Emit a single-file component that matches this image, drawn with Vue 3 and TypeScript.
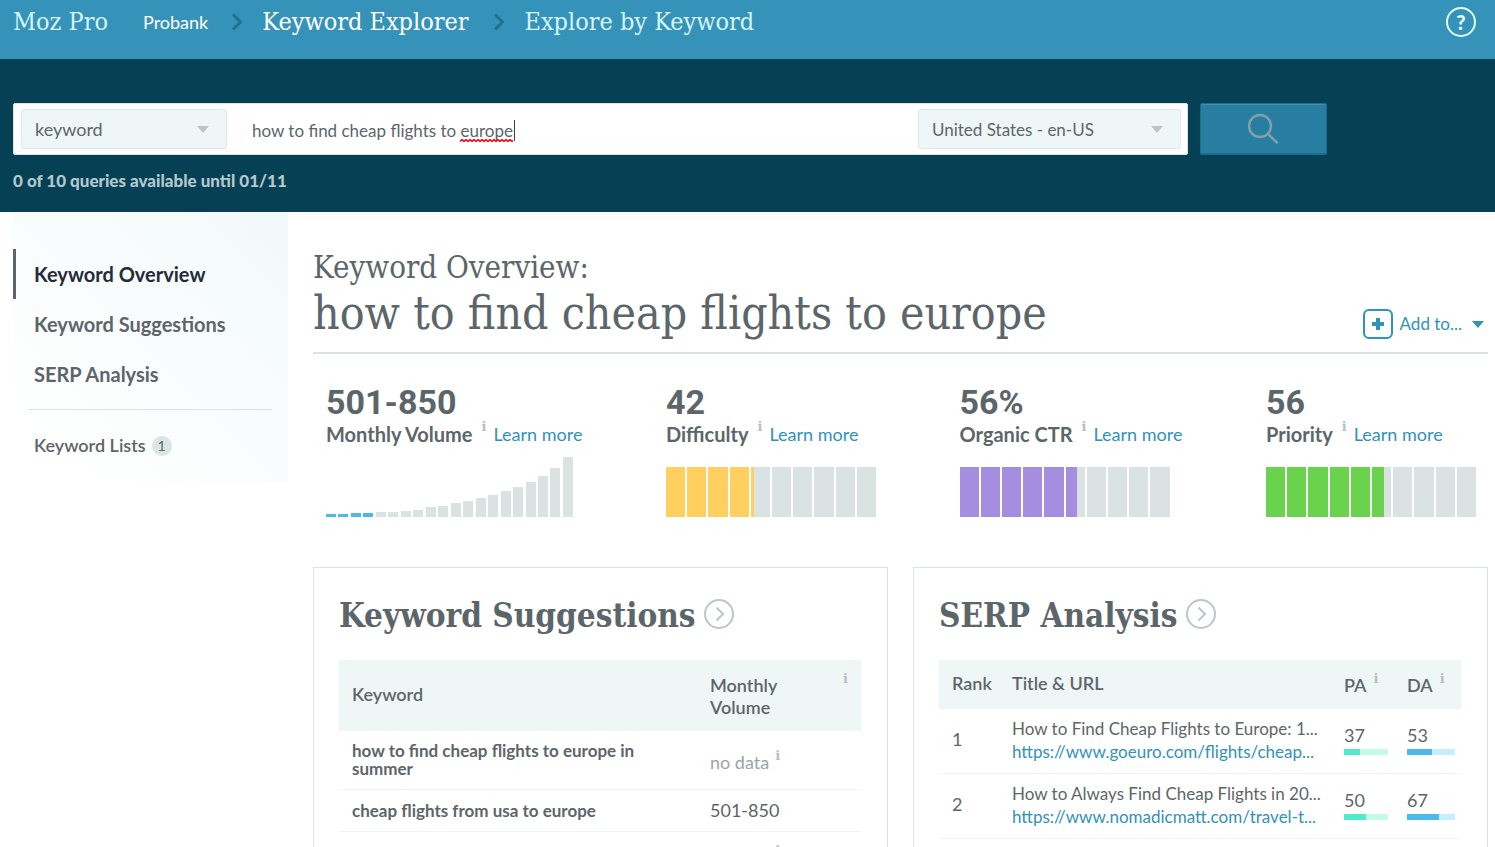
<script setup lang="ts">
import { ref } from 'vue'

interface Metric {
  value: string
  label: string
  score?: number
  color?: string
}

interface Suggestion {
  keyword: string
  volume: string | null
}

interface Result {
  rank: number
  title: string
  url: string
  pa: number
  da: number
}

const searchType = ref('keyword')
const query = ref('how to find cheap flights to europe')
const locale = ref('United States - en-US')

const metrics: Metric[] = [
  { value: '501-850', label: 'Monthly Volume' },
  { value: '42', label: 'Difficulty', score: 42, color: '#ffd060' },
  { value: '56%', label: 'Organic CTR', score: 56, color: '#a58de0' },
  { value: '56', label: 'Priority', score: 56, color: '#6ad34e' },
]

const volumeBars = [3, 3, 4, 4, 5, 5, 6, 7, 10, 11, 14, 16, 19, 22, 26, 30, 35, 41, 49, 60]
const activeVolumeBars = 4

// Share of one of the ten cells that the score covers, allowing for the 2px gutters.
function cellFill(score: number, index: number): number {
  const cell = 19.2
  const covered = score * 2.1 - index * (cell + 2)
  return Math.max(0, Math.min(100, (covered / cell) * 100))
}

const suggestions: Suggestion[] = [
  { keyword: 'how to find cheap flights to europe in summer', volume: null },
  { keyword: 'cheap flights from usa to europe', volume: '501-850' },
  { keyword: '', volume: null },
]

const results: Result[] = [
  { rank: 1, title: 'How to Find Cheap Flights to Europe: 1...', url: 'https://www.goeuro.com/flights/cheap...', pa: 37, da: 53 },
  { rank: 2, title: 'How to Always Find Cheap Flights in 20...', url: 'https://www.nomadicmatt.com/travel-t...', pa: 50, da: 67 },
]
</script>

<template>
  <div class="page">
    <header class="topbar">
      <nav class="crumbs" aria-label="Breadcrumb">
        <a href="#" class="brand">Moz Pro</a>
        <a href="#" class="account">Probank</a>
        <svg class="chevron" width="12" height="18" viewBox="0 0 12 18" aria-hidden="true"><path d="M2 1.5 9.5 9 2 16.5" /></svg>
        <a href="#" class="section">Keyword Explorer</a>
        <svg class="chevron" width="12" height="18" viewBox="0 0 12 18" aria-hidden="true"><path d="M2 1.5 9.5 9 2 16.5" /></svg>
        <a href="#" class="current">Explore by Keyword</a>
      </nav>
      <button type="button" class="help" aria-label="Help">?</button>
    </header>

    <section class="search">
      <form class="search-form" @submit.prevent>
        <div class="search-box">
          <div class="picker type">
            <select v-model="searchType" aria-label="Search type"><option>keyword</option></select>
            <svg width="12" height="7" viewBox="0 0 12 7" aria-hidden="true"><path d="M0 0h12L6 7z" /></svg>
          </div>
          <div class="query">
            <input v-model="query" type="text" aria-label="Search query" spellcheck="false" />
            <svg class="squiggle" width="55" height="3" viewBox="0 0 55 3" aria-hidden="true">
              <path d="M0 2.500 2 .5l2 2 2-2 2 2 2-2 2 2 2-2 2 2 2-2 2 2 2-2 2 2 2-2 2 2 2-2 2 2 2-2 2 2 2-2 2 2 2-2 2 2 2-2 2 2 2-2 2 2 1-1" />
            </svg>
            <span class="cursor" aria-hidden="true"></span>
          </div>
          <div class="picker locale">
            <select v-model="locale" aria-label="Locale"><option>United States - en-US</option></select>
            <svg width="12" height="7" viewBox="0 0 12 7" aria-hidden="true"><path d="M0 0h12L6 7z" /></svg>
          </div>
        </div>
        <button type="submit" class="go" aria-label="Search">
          <svg width="32" height="32" viewBox="0 0 32 32" aria-hidden="true"><circle cx="12" cy="13" r="11" /><path d="m20 21 9 8.500" /></svg>
        </button>
      </form>
      <p class="quota">0 of 10 queries available until 01/11</p>
    </section>

    <div class="body">
      <aside class="sidebar">
        <nav>
          <a href="#" class="active">Keyword Overview</a>
          <a href="#">Keyword Suggestions</a>
          <a href="#">SERP Analysis</a>
        </nav>
        <hr />
        <a href="#" class="lists">Keyword Lists <span class="count">1</span></a>
      </aside>

      <main>
        <div class="heading">
          <h1><small>Keyword Overview:</small>how to find cheap flights to europe</h1>
          <button type="button" class="add">
            <span class="plus"><svg width="12" height="12" viewBox="0 0 12 12" aria-hidden="true"><path d="M4 0h4v4h4v4H8v4H4V8H0V4h4z" /></svg></span>
            Add to...
            <svg class="caret" width="12" height="7" viewBox="0 0 12 7" aria-hidden="true"><path d="M0 0h12L6 7z" /></svg>
          </button>
        </div>

        <section class="metrics">
          <div v-for="m in metrics" :key="m.label" class="metric">
            <strong class="value">{{ m.value }}</strong>
            <div class="label-row">
              <span class="label">{{ m.label }}</span><span class="info">i</span><a href="#">Learn more</a>
            </div>
            <div v-if="m.score === undefined" class="histogram">
              <span
                v-for="(h, i) in volumeBars"
                :key="i"
                :class="{ on: i < activeVolumeBars }"
                :style="{ height: h + 'px' }"
              ></span>
            </div>
            <div v-else class="gauge">
              <span v-for="n in 10" :key="n" class="cell">
                <span class="fill" :style="{ width: cellFill(m.score, n - 1) + '%', background: m.color }"></span>
              </span>
            </div>
          </div>
        </section>

        <div class="panels">
          <section class="panel">
            <h2>
              Keyword Suggestions
              <a href="#" aria-label="Open Keyword Suggestions"><svg width="30" height="30" viewBox="0 0 30 30" aria-hidden="true"><circle cx="15" cy="15" r="14" /><path d="m12.500 8.500 6.500 6.500-6.500 6.500" /></svg></a>
            </h2>
            <table class="suggestions">
              <thead>
                <tr>
                  <th>Keyword</th>
                  <th class="volume"><div class="split"><span>Monthly<br />Volume</span><span class="info">i</span></div></th>
                </tr>
              </thead>
              <tbody>
                <tr v-for="(s, i) in suggestions" :key="i">
                  <td class="kw">{{ s.keyword }}</td>
                  <td>
                    <template v-if="s.volume">{{ s.volume }}</template>
                    <div v-else class="nodata">no data<span class="info">i</span></div>
                  </td>
                </tr>
              </tbody>
            </table>
          </section>

          <section class="panel">
            <h2>
              SERP Analysis
              <a href="#" aria-label="Open SERP Analysis"><svg width="30" height="30" viewBox="0 0 30 30" aria-hidden="true"><circle cx="15" cy="15" r="14" /><path d="m12.500 8.500 6.500 6.500-6.500 6.500" /></svg></a>
            </h2>
            <table class="serp">
              <thead>
                <tr>
                  <th class="rank">Rank</th>
                  <th>Title &amp; URL</th>
                  <th class="pa"><div class="abbr">PA<span class="info">i</span></div></th>
                  <th class="da"><div class="abbr">DA<span class="info">i</span></div></th>
                </tr>
              </thead>
              <tbody>
                <tr v-for="r in results" :key="r.rank">
                  <td>{{ r.rank }}</td>
                  <td class="page-cell">
                    <span class="title">{{ r.title }}</span>
                    <a href="#" class="url">{{ r.url }}</a>
                  </td>
                  <td class="pa">{{ r.pa }}<div class="meter"><div :style="{ width: r.pa + '%' }"></div></div></td>
                  <td class="da">{{ r.da }}<div class="meter"><div :style="{ width: r.da + '%' }"></div></div></td>
                </tr>
              </tbody>
            </table>
          </section>
        </div>
      </main>
    </div>
  </div>
</template>

<style>
html {
  scrollbar-width: none;
}
body {
  margin: 0;
  background: #fff;
}
</style>

<style scoped>
.page {
  --slab: "Roboto Slab", "DejaVu Serif Condensed", "DejaVu Serif", serif;
  font-family: Lato, "Open Sans", sans-serif;
  font-size: 18px;
  line-height: 22px;
  color: #5c666a;
}
* {
  box-sizing: border-box;
}
a {
  color: #3192ba;
  text-decoration: none;
}
button {
  padding: 0;
  font: inherit;
  cursor: pointer;
}

/* Top bar */
.topbar {
  display: flex;
  justify-content: space-between;
  padding: 6px 19px 0 13px;
  height: 59px;
  background: #3593ba;
}
.crumbs {
  display: flex;
  align-items: center;
  height: 32px;
}
.crumbs a {
  color: #fff;
  font-family: var(--slab);
  font-size: 25px;
  line-height: 32px;
  white-space: nowrap;
}
.crumbs .brand,
.crumbs .current {
  color: #d6f3f8;
}
.crumbs .account {
  margin: 0 23px 0 35px;
  font-family: Lato, sans-serif;
  font-size: 18px;
}
.crumbs .section {
  margin: 0 24px 0 19px;
}
.crumbs .current {
  margin-left: 20px;
}
.chevron {
  flex: none;
  fill: none;
  stroke: #22708f;
  stroke-width: 3;
}
.help {
  display: grid;
  place-items: center;
  width: 30px;
  height: 30px;
  margin-top: 1px;
  border: 2px solid #e4fbff;
  border-radius: 50%;
  background: none;
  color: #e4fbff;
  font-size: 20px;
  font-weight: 900;
  line-height: 24px;
}

/* Search */
.search {
  padding: 44px 13px 0;
  height: 153px;
  background: #064054;
}
.search-form {
  display: flex;
  gap: 12px;
  max-width: 1314px;
}
.search-box {
  display: flex;
  flex: 1;
  padding: 5px 6px 5px 7px;
  border: 1px solid #dbe5e4;
  border-radius: 2px;
  background: #fff;
}
.picker {
  position: relative;
}
.picker.type {
  width: 206px;
}
.picker.locale {
  width: 263px;
}
.picker select {
  width: 100%;
  height: 40px;
  padding: 0 13px;
  border: 1px solid #dde9e8;
  border-radius: 3px;
  background: #eff7f6;
  color: #5c666a;
  font: inherit;
  appearance: none;
}
.picker.locale select {
  padding-top: 2px;
  font-size: 17px;
}
.picker svg {
  position: absolute;
  top: 17px;
  right: 18px;
  fill: #b9c5c4;
  pointer-events: none;
}
.query {
  position: relative;
  flex: 1;
}
.query input {
  width: 100%;
  height: 40px;
  padding: 2px 25px 0;
  border: 0;
  outline: 0;
  background: none;
  color: #5c666a;
  font: inherit;
  font-size: 17px;
}
.squiggle {
  position: absolute;
  top: 30px;
  left: 233px;
  fill: none;
  stroke: #ff0000;
  stroke-width: 1.5;
}
.cursor {
  position: absolute;
  top: 11px;
  left: 287px;
  width: 1px;
  height: 21px;
  background: #33404a;
}
.go {
  display: grid;
  place-items: center;
  width: 127px;
  height: 52px;
  border: 1px solid #1d6c8e;
  border-bottom-width: 2px;
  border-radius: 2px;
  background: #287ea1;
  box-shadow: inset 0 1px #4a8da5;
}
.go svg {
  fill: none;
  stroke: #80a1ab;
  stroke-width: 2.5;
  stroke-linecap: round;
}
.quota {
  margin: 15px 0 0;
  color: #b5c8ce;
  font-size: 17px;
  font-weight: 900;
}

/* Body */
.body {
  display: grid;
  grid-template-columns: 275px minmax(0, 1fr);
  gap: 25px;
  align-items: start;
  padding: 0 7px 0 13px;
}
.sidebar {
  height: 270px;
  padding-top: 37px;
  background: linear-gradient(to bottom left, #f2f9fa, #fff 90%);
}
.sidebar nav a {
  display: block;
  padding-left: 18px;
  border-left: 3px solid transparent;
  color: #5c666a;
  font-size: 20px;
  font-weight: 700;
  line-height: 50px;
}
.sidebar nav a.active {
  border-color: #5c666a;
  color: #252b38;
}
.sidebar hr {
  margin: 10px 16px 24px;
  border: 0;
  border-top: 1px solid #dbe3e2;
}
.lists {
  display: flex;
  align-items: center;
  gap: 6px;
  padding-left: 21px;
  color: #5c666a;
  font-weight: 600;
}
.count {
  width: 20px;
  height: 20px;
  margin-top: 2px;
  border-radius: 50%;
  background: #dbe5e4;
  font-size: 14px;
  font-weight: 400;
  line-height: 20px;
  text-align: center;
}

.heading {
  display: flex;
  justify-content: space-between;
  align-items: flex-end;
  height: 142px;
  padding-bottom: 10px;
  border-bottom: 2px solid #dbe3e2;
}
h1 {
  margin: 0;
  font-family: var(--slab);
  font-size: 46px;
  font-weight: 300;
  line-height: 58px;
  white-space: nowrap;
}
h1 small {
  display: block;
  font-size: 31px;
  line-height: 34px;
}
.add {
  display: flex;
  align-items: center;
  gap: 7px;
  height: 30px;
  margin: 0 4px 3px 0;
  border: 0;
  background: none;
  color: #3192ba;
  font-size: 17px;
  white-space: nowrap;
}
.plus {
  display: grid;
  place-items: center;
  width: 30px;
  height: 30px;
  border: 2px solid #3192ba;
  border-radius: 6px;
}
.add svg {
  fill: #3192ba;
}
.caret {
  margin-left: 3px;
}

/* Metrics */
.metrics {
  display: flex;
  justify-content: space-between;
  padding: 28px 12px 0 13px;
}
.metric {
  display: flex;
  flex-direction: column;
}
.value {
  font-family: Roboto, sans-serif;
  font-size: 34px;
  line-height: 40px;
}
.label-row {
  display: flex;
  line-height: 24px;
}
.label {
  font-size: 20px;
  font-weight: 700;
}
.info {
  margin: 0 7px 0 9px;
  color: #b4c1c0;
  font-family: "DejaVu Serif", serif;
  font-size: 13px;
  font-weight: 700;
  line-height: 10px;
}
.histogram,
.gauge {
  display: flex;
  height: 60px;
  margin-top: 11px;
}
.histogram {
  width: 247px;
  justify-content: space-between;
  align-items: flex-end;
}
.histogram span {
  width: 10px;
  background: #dbe3e2;
}
.histogram .on {
  background: #4cb9ec;
}
.gauge {
  width: 210px;
  padding-top: 10px;
  gap: 2px;
}
.cell {
  flex: 1;
  background: #dbe3e2;
}
.fill {
  display: block;
  height: 100%;
}

/* Panels */
.panels {
  display: grid;
  grid-template-columns: repeat(2, minmax(0, 1fr));
  gap: 25px;
  margin-top: 50px;
}
.panel {
  padding: 25px 26px 25px 25px;
  border: 1px solid #dbe3e2;
}
h2 {
  display: flex;
  align-items: center;
  gap: 8px;
  margin: 0 0 21px;
  font-family: var(--slab);
  font-size: 33px;
  line-height: 46px;
  white-space: nowrap;
}
h2 a {
  height: 30px;
  margin-bottom: 4px;
}
h2 svg {
  display: block;
  fill: none;
  stroke: #b9c8c7;
  stroke-width: 2;
}
table {
  width: 100%;
  border-collapse: separate;
  border-spacing: 0;
  table-layout: fixed;
}
th {
  padding: 0 13px 4px;
  background: #eff7f6;
  font-weight: 600;
  text-align: left;
}
td {
  padding: 0 13px;
  border-bottom: 1px solid #eff5f5;
}
.suggestions th {
  height: 71px;
}
.suggestions .volume {
  width: 164px;
}
.suggestions td {
  padding: 11px 13px;
  line-height: 19px;
}
.split {
  display: flex;
  justify-content: space-between;
  padding-top: 5px;
}
.split .info {
  margin: 0;
}
.suggestions .kw {
  font-size: 17px;
  font-weight: 700;
  line-height: 18px;
}
.nodata {
  display: flex;
  padding-top: 5px;
  color: #98a5a6;
}
.nodata .info {
  margin-left: 6px;
  line-height: 6px;
}
.serp th {
  height: 49px;
}
.serp .rank {
  width: 60px;
  padding-right: 0;
}
.serp .pa {
  width: 63px;
  padding-right: 6px;
}
.serp .da {
  width: 67px;
  padding-right: 6px;
}
.abbr {
  display: flex;
  padding-top: 5px;
}
.abbr .info {
  margin: 0 0 0 7px;
}
.serp td {
  height: 65px;
  padding-bottom: 4px;
}
.serp .page-cell {
  padding-right: 0;
  padding-bottom: 2px;
  font-size: 17px;
  white-space: nowrap;
}
.title,
.url {
  display: block;
  height: 19px;
  overflow: hidden;
  line-height: 20px;
}
.url {
  margin-top: 4px;
}
.meter {
  height: 6px;
  margin-top: 3px;
}
.meter div {
  height: 100%;
}
.pa .meter {
  background: #c3fae9;
}
.pa .meter div {
  background: #53e9cb;
}
.da .meter {
  background: #c5effd;
}
.da .meter div {
  background: #4cb9ec;
}
</style>
